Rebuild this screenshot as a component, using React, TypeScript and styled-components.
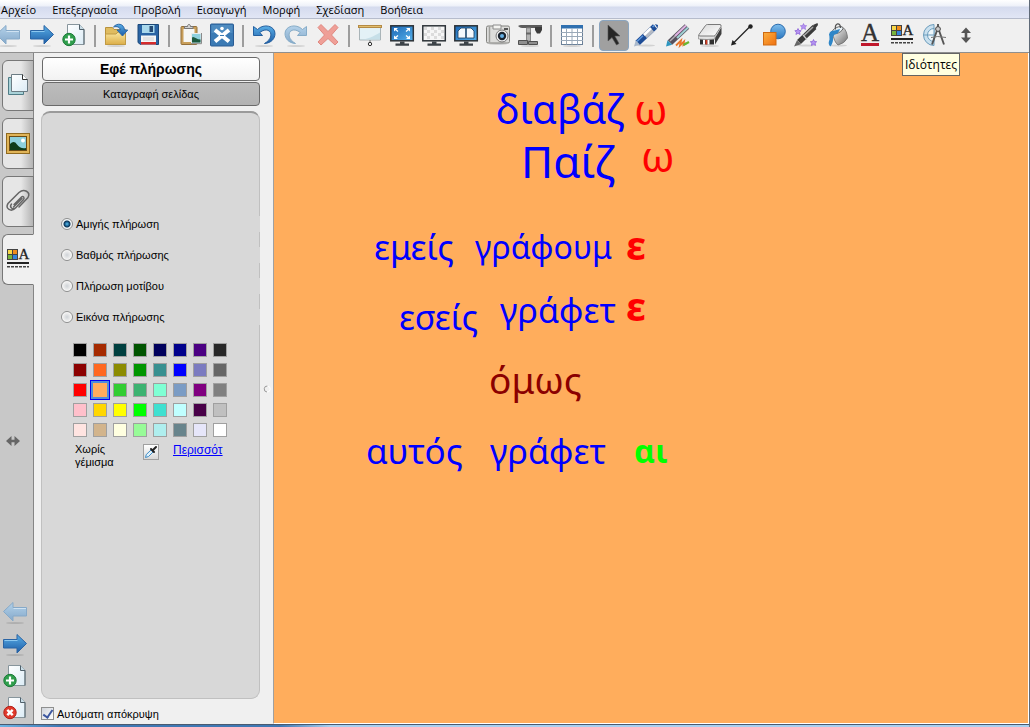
import React from "react";
import styled, { createGlobalStyle, css } from "styled-components";

const uiFont = css`
  font-family: "Open Sans", "Noto Sans", sans-serif;
`;
const panelFont = css`
  font-family: "Liberation Sans", Arial, sans-serif;
`;

const GlobalStyle = createGlobalStyle`
  * { box-sizing: border-box; }
  body { margin: 0; background: #f0f0f0; color: #000; overflow: hidden; }
  button { margin: 0; padding: 0; border: 0; background: none; color: inherit; cursor: pointer; }
  svg { overflow: visible; }
`;

const Window = styled.div`
  height: 100vh;
  display: flex;
  flex-direction: column;
  border-right: 1px solid #5f6a78;
  background: #f0f0f0;
`;

const MenuBar = styled.nav`
  display: flex;
  flex: none;
  height: 19px;
  padding-top: 1px;
  border-bottom: 1px solid #b6bccc;
  background: linear-gradient(#ffffff 0, #eef1f9 6px, #d5dbee 7px, #e1e6f5 18px);
`;

const MenuItem = styled.button`
  ${uiFont}
  font-size: 11px;
  line-height: 17px;
  padding: 0 8px;
  white-space: nowrap;
  &:first-child { padding-left: 1px; }
`;

const Toolbar = styled.div`
  display: flex;
  flex: none;
  align-items: center;
  height: 34px;
  border-bottom: 1px solid #8f8f8f;
  background: #f0f0f0;
`;

const ToolSlot = styled.div`
  position: relative;
  flex: none;
  width: 32px;
  height: 32px;
  display: flex;
  justify-content: center;
  &:first-child { width: 26px; justify-content: flex-end; padding-right: 3px; }
`;

const ToolButton = styled.button<{ $active?: boolean }>`
  width: 30px;
  height: 31px;
  display: flex;
  flex: none;
  align-items: center;
  justify-content: center;
  border-radius: 4px;
  ${(p) => p.$active && css`background: #a0a0a0; border: 1px solid #8aa5c0;`}
`;

const Separator = styled.span`
  flex: none;
  width: 2px;
  height: 22px;
  margin: 0 4px;
  background: #9d9d9d;
`;

const Tooltip = styled.div`
  ${uiFont}
  position: absolute;
  z-index: 2;
  top: 33px;
  left: 16px;
  height: 23px;
  padding: 0 2px;
  border: 1px solid #646464;
  background: #ffffe1;
  font-size: 12px;
  line-height: 21px;
`;

const Workspace = styled.div`
  flex: 1;
  min-height: 0;
  display: flex;
`;

const Rail = styled.aside`
  flex: none;
  width: 34px;
  display: flex;
  flex-direction: column;
  padding-top: 7px;
  border-right: 1px solid #858585;
  background: #c8c8c8;
`;

const RailTabs = styled.div`
  display: flex;
  flex-direction: column;
  gap: 7px;
  margin: 0 -1px 0 2px;
`;

const RailTab = styled.button<{ $active?: boolean }>`
  height: 51px;
  display: flex;
  align-items: center;
  justify-content: center;
  padding-bottom: 2px;
  border: 1px solid #777;
  border-radius: 6px 0 0 6px;
  background: linear-gradient(90deg, #e6e6e6 60%, #b4b4b4);
  ${(p) => p.$active && css`background: #f0f0f0; border-right-color: #f0f0f0;`}
`;

const RailMiddle = styled.div`
  flex: 1;
  display: flex;
  align-items: center;
  padding: 4px 0 0 5px;
`;

const RailButton = styled.button`
  height: 32px;
  display: flex;
  align-items: center;
  padding-left: 3px;
`;

const Panel = styled.section`
  ${panelFont}
  flex: none;
  width: 226px;
  display: flex;
  flex-direction: column;
  padding: 4px 0 1px 7px;
  font-size: 11px;
`;

const PanelTab = styled.button<{ $active?: boolean }>`
  ${panelFont}
  flex: none;
  height: 24px;
  margin: 0 0 1px 1px;
  border: 1px solid #6a6a6a;
  border-radius: 4px;
  font-size: ${(p) => (p.$active ? "14px" : "11px")};
  font-weight: ${(p) => (p.$active ? 700 : 400)};
  background: ${(p) => (p.$active ? "linear-gradient(#ffffff, #f2f2f2)" : "linear-gradient(#bcbcbc, #b2b2b2)")};
`;

const PanelBody = styled.div`
  flex: 1;
  min-height: 0;
  margin-top: 4px;
  padding: 103px 0 0 19px;
  border: 1px solid #c0c0c0;
  border-top: 2px solid #9a9a9a;
  border-radius: 9px;
  background: #d8d8d8;
`;

const RadioRow = styled.label`
  display: flex;
  align-items: center;
  gap: 3px;
  height: 16px;
  margin: 0 -1px 15px 0;
  background: #d8d8d8;
`;

const Radio = styled.input`
  appearance: none;
  width: 12px;
  height: 12px;
  margin: 0;
  border: 1px solid #8e8f8f;
  border-radius: 50%;
  background: radial-gradient(#cfd3d7 0, #f0f0f0 4px, #ffffff 5px);
  &:checked { background: radial-gradient(#5fc2ec 0, #1a5f92 2px, #0d3352 3px, #f2f6f8 4px); }
`;

const Palette = styled.div`
  display: grid;
  grid-template-columns: repeat(8, 20px);
  grid-auto-rows: 20px;
  margin: 7px 0 0 9px;
`;

const Swatch = styled.button<{ $color: string; $selected?: boolean }>`
  margin: 3px;
  border: 1px solid #a0a0a0;
  background: ${(p) => p.$color};
  ${(p) => p.$selected && css`
    margin: 0;
    border: 1px solid #0000f0;
    box-shadow: inset 0 0 0 2px #4f8fd8;
  `}
`;

const PaletteFooter = styled.div`
  display: flex;
  align-items: flex-start;
  margin: 3px 0 0 14px;
`;

const NoFill = styled.button`
  ${panelFont}
  width: 68px;
  font-size: 11px;
  line-height: 13px;
  text-align: left;
`;

const Dropper = styled.button`
  width: 16px;
  height: 16px;
  margin-top: 1px;
  border: 1px solid #a0a0a0;
  background: linear-gradient(#fff, #d8d8d8);
  svg { display: block; }
`;

const MoreLink = styled.a`
  ${panelFont}
  width: 52px;
  margin-left: 14px;
  overflow: hidden;
  font-size: 12px;
  line-height: 15px;
  color: #0000ff;
`;

const AutoHide = styled.label`
  flex: none;
  display: flex;
  align-items: center;
  gap: 3px;
  height: 23px;
  margin-top: 1px;
`;

const CheckBox = styled.input`
  appearance: none;
  width: 13px;
  height: 13px;
  margin: 4px 0 0;
  border: 1px solid #8e8f8f;
  background: linear-gradient(135deg, #d0d4da, #ffffff);
  & + span { margin-top: 4px; }
  &:checked::after {
    content: "";
    display: block;
    width: 4px;
    height: 8px;
    margin: 0 auto;
    border: solid #3c57a0;
    border-width: 0 2px 2px 0;
    transform: rotate(35deg);
  }
`;

const Splitter = styled.div`
  flex: none;
  width: 13px;
  display: flex;
  align-items: center;
  padding-left: 2px;
`;

const Board = styled.main`
  position: relative;
  flex: 1;
  min-width: 0;
  overflow: hidden;
  border-left: 1px solid #a0a0a0;
  border-right: 1px solid #fff;
  border-bottom: 1px solid #fff;
  background: #ffad5c;
`;

const Word = styled.span<{ $x: number; $y: number; $size: number; $color: string; $bold?: boolean }>`
  position: absolute;
  left: ${(p) => p.$x}px;
  top: ${(p) => p.$y}px;
  font-family: "Noto Sans", "Open Sans", sans-serif;
  font-size: ${(p) => p.$size}px;
  font-weight: ${(p) => (p.$bold ? 700 : 400)};
  line-height: 48px;
  white-space: nowrap;
  color: ${(p) => p.$color};
`;

const WindowEdge = styled.footer`
  flex: none;
  height: 3px;
  border-top: 1px solid #4a5a70;
  background: linear-gradient(90deg, #6cb4e4 0, #3f78b4 60px, #3f78b4 280px, #a8d0f0 330px);
`;

/* ---------- icons ---------- */

const Svg = ({ children, w = 24, h = 24 }: { children: React.ReactNode; w?: number; h?: number }) => (
  <svg width={w} height={h} viewBox={`0 0 ${w} ${h}`} fill="none" aria-hidden="true">{children}</svg>
);

const GradientDefs = styled.svg`
  display: block;
`;

const Gradients = () => (
  <GradientDefs width="0" height="0" aria-hidden="true">
    <defs>
      <linearGradient id="blue" x1="0" y1="0" x2="0" y2="1"><stop stopColor="#5aaee6" /><stop offset="1" stopColor="#1c5ca6" /></linearGradient>
      <linearGradient id="pale" x1="0" y1="0" x2="0" y2="1"><stop stopColor="#b4d2ea" /><stop offset="1" stopColor="#85a9ca" /></linearGradient>
      <linearGradient id="paper" x1="0" y1="0" x2="1" y2="1"><stop stopColor="#ffffff" /><stop offset="1" stopColor="#dcecf6" /></linearGradient>
      <linearGradient id="gold" x1="0" y1="0" x2="0" y2="1"><stop stopColor="#fbe7a0" /><stop offset="1" stopColor="#dcae48" /></linearGradient>
      <linearGradient id="screen" x1="0" y1="0" x2="1" y2="1"><stop stopColor="#1b66b4" /><stop offset="1" stopColor="#55b0ea" /></linearGradient>
      <linearGradient id="ball" x1="0" y1="0" x2="0" y2="1"><stop stopColor="#7cbcec" /><stop offset="1" stopColor="#2c78c0" /></linearGradient>
      <linearGradient id="steel" x1="0" y1="0" x2="1" y2="1"><stop stopColor="#ffffff" /><stop offset="1" stopColor="#6c6c6c" /></linearGradient>
      <linearGradient id="rubber" x1="0" y1="0" x2="1" y2="1"><stop stopColor="#d8d8d8" /><stop offset="1" stopColor="#ffffff" /></linearGradient>
      <linearGradient id="orange" x1="0" y1="0" x2="1" y2="1"><stop stopColor="#fcb040" /><stop offset="1" stopColor="#f07010" /></linearGradient>
    </defs>
  </GradientDefs>
);

const Shade = ({ y = 23 }: { y?: number }) => <ellipse cx="12" cy={y} rx="9" ry="1" fill="#000" opacity=".12" />;

const BackIcon = () => (
  <Svg><path d="M.5 11.500 10 2.500v5h13.500v8.500H10v5z" fill="url(#pale)" stroke="#86a9c8" /><path d="M10.500 8.500h12.500" stroke="#cfe2f2" /><Shade /></Svg>
);
const ForwardIcon = () => (
  <Svg><path d="M23.500 11.500 14 2.500v5H.5v8.500H14v5z" fill="url(#blue)" stroke="#2a64a4" /><path d="M1.500 8.500h13" stroke="#8cc8f0" /><Shade /></Svg>
);
const Page = () => (
  <><path d="M5.500 1.500h12l4.500 5v15h-16.500z" fill="url(#paper)" stroke="#87959c" /><path d="M17.500 1.500v5H22" fill="#c8dce6" stroke="#50606a" /><path d="M22 6.500v15" stroke="#56666e" /></>
);
const AddPageIcon = () => (
  <Svg><Page /><circle cx="7" cy="16.500" r="6.200" fill="#2f9e4c" stroke="#1b7a38" /><path d="M7 12.500v8M3 16.500h8" stroke="#fff" strokeWidth="2.200" /></Svg>
);
const DeletePageIcon = () => (
  <Svg><Page /><circle cx="7" cy="16.500" r="6.200" fill="#e03a2c" stroke="#b32018" /><path d="m4.300 13.800 5.400 5.400m0-5.400-5.400 5.400" stroke="#fff" strokeWidth="2.400" /></Svg>
);
const OpenIcon = () => (
  <Svg><path d="M1.500 21.500v-17h7l1.500 2h11.500v15z" fill="#e0bc60" stroke="#b8923c" /><path d="M1.500 21.500V11H12l2-2h7.500v12.500z" fill="url(#gold)" stroke="#c09a44" /><path d="M9.500 4C13-.5 20 .5 20.500 7h3.200l-5.200 6L13 7h3.300c-.3-3-3.300-4-6.800-3z" fill="url(#blue)" stroke="#2c68a8" /><Shade /></Svg>
);
const SaveIcon = () => (
  <Svg><path d="M2 1.500h20.500v20h-18L2 19.500z" fill="#2a64a4" stroke="#1b4878" /><path d="M6 2h12.500v8H6z" fill="#a9d8ec" /><path d="M13.500 3H17v6h-3.500z" fill="#254a74" /><path d="M5 12.500h15v9H5z" fill="#f6f6f6" /><path d="M5 19h15v2.500H5z" fill="#d62c2c" /><path d="M7 15h11M7 17h11" stroke="#d4d4d4" /></Svg>
);
const PasteIcon = () => (
  <Svg><rect x="3" y="3.500" width="16" height="18" rx="1" fill="#c99f5a" stroke="#94703a" /><path d="M5.500 6h11v13h-11z" fill="#f6f6f4" /><path d="M6.500 5.500v-2H9.500c0-2.800 3-2.800 3 0H15v2z" fill="#d0d0d0" stroke="#777" /><rect x="13.500" y="10.500" width="9.500" height="9.500" fill="#8ed0de" stroke="#e8ecec" /><path d="M14 14.500c2-2 4 2 8.500 2v3H14z" fill="#1d5a40" /><path d="M23.500 10v10.700H13" stroke="#8a8a8a" /></Svg>
);
const HideIcon = () => (
  <Svg><rect x=".5" y="1" width="23" height="22" rx="1" fill="#3b7ab4" stroke="#2a5c94" /><path d="M1.500 2h21v8h-21z" fill="#5c96c8" opacity=".6" /><circle cx="12" cy="5.500" r="1.800" fill="#fff" /><path d="m5 7 14 11.500M19 7 5 18.500" stroke="#fff" strokeWidth="4" /><path d="m10 12.500 4 0" stroke="#3b7ab4" /></Svg>
);
const UndoIcon = () => (
  <Svg><path d="M1.500 3.500v9h9L7.800 9.500c6-5 12-2 11 3.500-.5 3-3 5.500-6.300 7.500 7-.5 10.500-5 10.500-10 0-7.500-11-10.500-17.500-4z" fill="url(#blue)" stroke="#25609f" /><Shade /></Svg>
);
const RedoIcon = () => (
  <Svg><path d="M22.500 3.500v9h-9l2.700-3c-6-5-12-2-11 3.500.5 3 3 5.500 6.300 7.500-7-.5-10.500-5-10.500-10 0-7.500 11-10.500 17.500-4z" fill="url(#pale)" stroke="#86acc8" /><Shade /></Svg>
);
const DeleteIcon = () => (
  <Svg><path d="m5 1.500 7 7 7-7 3 3-6.500 7.500 6.500 7-3 3-7-6.500L5 22l-3-3 6.500-7L2 4.500z" fill="#ef9f97" stroke="#e08880" /></Svg>
);
const ShadeIcon = () => (
  <Svg><path d="M1.500 4h21v13h-21z" fill="#e3f1f6" stroke="#a9b4b8" /><path d="M2 16.500c8 0 13-3 20-7v7z" fill="#c6dfe8" /><rect x=".5" y="2.500" width="23" height="2" fill="#e2bd6c" stroke="#b48a44" /><path d="M12 17v2.500" stroke="#777" /><circle cx="12" cy="21" r="1.700" stroke="#333" /></Svg>
);
const Monitor = ({ fill, children }: { fill: string; children?: React.ReactNode }) => (
  <Svg><rect x=".8" y="2.800" width="22.500" height="15" fill={fill} stroke="#2d3338" strokeWidth="1.500" />{children}<path d="M10 18.500h4.500v2H19v2.200H5.500v-2.200H10z" fill="#3c4348" /></Svg>
);
const FullScreenIcon = () => (
  <Monitor fill="url(#screen)"><path d="M4 5h4L4 8.500zM20 5h-4l4 3.500zM4 16h4l-4-3.500zM20 16h-4l4-3.500z" fill="#fff" /><path d="m5 6 3 2.500M19 6l-3 2.500M5 15l3-2.500M19 15l-3-2.500" stroke="#fff" strokeWidth="1.300" /></Monitor>
);
const ClearScreenIcon = () => (
  <Monitor fill="#f6f6f6">{[0, 1, 2, 3].map((r) => [0, 1, 2].map((c) => <rect key={`${r}${c}`} x={2 + c * 7 + (r % 2) * 3} y={4 + r * 3} width="3" height="3" fill="#dcdcdc" />))}</Monitor>
);
const DualIcon = () => (
  <Monitor fill="url(#screen)"><path d="M4 15V8l3-3h4.700v10zM20 15V8l-3-3h-4.700v10z" fill="#f4f9fc" stroke="#173c60" strokeWidth=".8" /></Monitor>
);
const CameraIcon = () => (
  <Svg><rect x=".5" y="3" width="23" height="17" rx="1.500" fill="#dcdcda" stroke="#82827e" /><path d="M3.500 3.500v16" stroke="#a0a09c" strokeWidth="1.500" /><path d="M7 2h8v4H7z" fill="#f3f3f0" stroke="#8c8c8c" /><path d="M18 6h4" stroke="#555" strokeWidth="2" /><circle cx="16" cy="13" r="6" fill="#efefef" stroke="#777" /><circle cx="16" cy="13" r="4.200" fill="#1b2430" /><circle cx="16" cy="13" r="2" fill="#66b0e4" /><Shade y={21} /></Svg>
);
const DocCamIcon = () => (
  <Svg><path d="M0 3q2-1.500 4-1h20v3H4Q2 5 0 3z" fill="#5c5c5c" /><path d="M17 4h7v3l-2 3.500h-3L17 7z" fill="#3c3c3c" /><path d="M8.500 5h4v13h-4z" fill="#b4b4b4" stroke="#888" /><path d="M8 9.500h5v2H8z" fill="#666" /><path d="M.5 17.500h9v4h-9zM10.500 18.500h9v3h-9z" fill="#8f8f8f" stroke="#505050" /><Shade /></Svg>
);
const TableIcon = () => (
  <Svg><rect x="1.500" y="2.500" width="21" height="19" fill="#fff" stroke="#6a8098" /><path d="M1 2h22v3.500H1z" fill="#2f70b0" /><path d="M1 9.500h22M1 13.500h22M1 17.500h22M6.500 5.500v16M12 5.500v16M17.500 5.500v16" stroke="#9aa9b8" /><Shade y={23} /></Svg>
);
const SelectIcon = () => (
  <Svg><path d="M6 2v16l4-3.500 4.500 7.500 2.500-1.500-4.200-7.500H18z" fill="#262626" stroke="#555" strokeWidth=".6" /></Svg>
);
const PenIcon = () => (
  <Svg><Shade y={22.500} /><path d="M3.500 20 21 3.500" stroke="#1d4c96" strokeWidth="6" /><path d="M11 13 18 6.300" stroke="#b4bac4" strokeWidth="6" /><path d="m10 12 7-6.800" stroke="#ffffff" strokeWidth="2.500" /><path d="m3 18.500 6-5.700M18.500 4l2-1.800" stroke="#5c96dc" strokeWidth="1.500" /><path d="m21 1 3 1-.5 3.500z" fill="#1d4c96" /><path d="m0 23.500 1.800-6.300 4.200 4.500z" fill="#a8b8cc" /></Svg>
);
const CreativePenIcon = () => (
  <Svg><path d="m10 22.500 5-5-1 5 4-4-.5 3.500 3-2" stroke="#e8762a" strokeWidth="1.800" /><path d="m17.500 22 5.500-3" stroke="#66b832" strokeWidth="2" /><path d="M4 19.500 21 3.500" stroke="#56505c" strokeWidth="6.500" /><path d="M9 13 20 2.500" stroke="#e0b4e4" strokeWidth="2" /><path d="M11 15 22 4.500" stroke="#9fd0d4" strokeWidth="2" /><path d="m4 18 5.500-5.200" stroke="#b4b0b8" strokeWidth="1.400" /><path d="m0 23.500 1.500-6.300 4.700 4.500z" fill="#2c96c0" /></Svg>
);
const EraserIcon = () => (
  <Svg><Shade /><path d="m23.500 4-6.500 11v6.500L23.500 11z" fill="#404040" /><path d="M2 16h14v5.500H2z" fill="#303030" /><path d="M5 16.500h2v5H5z" fill="#fff" /><path d="M7.500 16.500h2v5h-2z" fill="#d63c22" /><path d="M9.500 16.500h2v5h-2z" fill="#fff" /><path d="M.5 12.500h16.500v3.500q-8 1-16.500 0z" fill="#e4e4e4" stroke="#888" strokeWidth=".7" /><path d="M9.500 1.500H22q1.500 0 1 2L17.500 12q-.5 1-2 1H2q-2 0-1-1.500L7.500 2.500q.8-1 2-1z" fill="url(#rubber)" stroke="#6c6c6c" strokeWidth=".9" /></Svg>
);
const LineIcon = () => (
  <Svg><path d="M3 20.500 19.500 4" stroke="#222" strokeWidth="1.300" /><circle cx="20.500" cy="3.500" r="2.200" fill="#222" /><path d="m1 22.500 1.500-5.500 4 4z" fill="#222" /></Svg>
);
const ShapesIcon = () => (
  <Svg><circle cx="16" cy="8.500" r="7.300" fill="url(#ball)" stroke="#2b6cae" /><rect x="1.500" y="9.500" width="12.500" height="12.500" fill="url(#orange)" stroke="#cf6a12" /></Svg>
);
const star = (x: number, y: number) => `M${x} ${y - 3}l1 2 2.200.2-1.600 1.500.5 2.300-2.100-1.200-2.100 1.200.5-2.300-1.600-1.500 2.200-.2z`;
const MagicPenIcon = () => (
  <Svg><Shade y={22.500} /><path d="M5 19 20.500 4" stroke="#3a3a3a" strokeWidth="5.500" /><path d="m19 2 4.500-2 .5 2-3 4z" fill="#3a3a3a" /><path d="m10 12.500 9-8.500" stroke="#a8a8a8" strokeWidth="1.500" /><path d="m9 12 4 4.500" stroke="#ccc" strokeWidth="1.300" /><path d="m0 23.500 3-6.300 4 4z" fill="#666" /><path d={star(4, 8.500)} fill="#b593f2" stroke="#8458d4" strokeWidth=".7" /><path d={star(9.500, 3.500)} fill="#b593f2" stroke="#8458d4" strokeWidth=".5" /><path d={star(19.500, 19.500)} fill="#b593f2" stroke="#8458d4" strokeWidth=".7" /></Svg>
);
const FillIcon = () => (
  <Svg><Shade y={22.500} /><path d="m6.500 9.500 10.500-5q4 3 4.500 10.500-3 5.500-9.500 7-4-3-5.500-12.500z" fill="url(#steel)" stroke="#6c6c6c" strokeWidth=".8" /><ellipse cx="11.500" cy="7.200" rx="6" ry="2.800" transform="rotate(-26 11.500 7.200)" fill="#e8f0f4" stroke="#555" strokeWidth=".8" /><path d="M9.500 6.500C8.500-.5 14.500-1 14.500 5" stroke="#555" strokeWidth="1.300" /><path d="M5.500 8q4-.5 8.500-2-1.500 5-5.500 5.500L7 14q.5 5.500-2.500 9.500-3-2-1-7 0-4-.5-5 .5-3 2.500-3.500z" fill="#2e86c8" /></Svg>
);
const TextIcon = () => (
  <Svg><text x="12" y="18" textAnchor="middle" fontFamily="Liberation Serif, serif" fontSize="25" fill="#333" stroke="#333" strokeWidth=".4">A</text><path d="M3 20h18v3H3z" fill="#c0182c" /></Svg>
);
const PropertiesIcon = () => (
  <Svg><path d="M1 2h11v11H1z" fill="#444" /><path d="M2 3h4v4H2z" fill="#f8d848" /><path d="M7 3h4v4H7z" fill="#f08c1c" /><path d="M2 8h4v4H2z" fill="#78b43c" /><path d="M7 8h4v4H7z" fill="#3484dc" /><text x="18" y="12" textAnchor="middle" fontFamily="Liberation Serif, serif" fontSize="15" fill="#222" stroke="#222" strokeWidth=".3">A</text><path d="M1 16h22" stroke="#222" strokeWidth="2" /><path d="M1 19.800h22" stroke="#444" strokeWidth="1.500" strokeDasharray="3 1" /></Svg>
);
const MeasureIcon = () => (
  <Svg><path d="M12 1.500a10.500 10.500 0 0 0 0 21z" fill="#c9e0ee" stroke="#6b9cbc" /><path d="M12 5.500a6.500 6.500 0 0 0 0 13z" fill="#eef6fa" stroke="#6b9cbc" /><path d="M2 12h10" stroke="#6b9cbc" /><path d="M16 1v4M15.500 6 10 21.500M16.500 6l5.500 15.500" stroke="#555" strokeWidth="1.900" /><circle cx="16" cy="6" r="2.400" fill="#ccc" stroke="#444" /><path d="M9 14.500q6-2 15 0" stroke="#777" /></Svg>
);
const VerticalIcon = () => (
  <Svg><path d="m12 4.500 5 5.500h-3.700v4.500H17L12 20l-5-5.500h3.700V10H7z" fill="#555" /></Svg>
);
const PagesIcon = () => (
  <Svg><path d="M2.500 4.500h15v17h-15z" fill="#a9d2d8" stroke="#4f7c86" /><path d="M5.500 1.500h11l5 5v12h-16z" fill="url(#paper)" stroke="#6c7c84" /><path d="M16.500 1.500v5h5" fill="#fff" stroke="#333" /></Svg>
);
const GalleryIcon = () => (
  <Svg><rect x=".5" y="2.500" width="23" height="20" fill="#e0b458" stroke="#906a20" /><rect x="3.500" y="5.500" width="17" height="14" fill="#8ed0dc" stroke="#6c4c14" /><circle cx="17" cy="9.500" r="2" fill="#fff" /><path d="M4 13q4-4 7 .5t9 3.500v2H4z" fill="#0e3c1a" /></Svg>
);
const ClipIcon = () => (
  <Svg><path d="m8 15.500 7.500-7.500c1.500-1.500 3.500.5 2 2.500L10 18.500c-3.500 3-7-.5-4.500-3.500M7.500 18 16 9.500M10 18.500C5 24-1 19.500 2 14.500L13 3.500c5-4.500 12-.5 9 5L13 18" stroke="#666" strokeWidth="1.500" strokeLinecap="round" /></Svg>
);
const ResizeIcon = () => (
  <Svg w={16} h={12}><path d="m1 6 5.500-5v3.700h3V1L15 6l-5.500 5V7.300h-3V11z" fill="#666" /></Svg>
);
const DropperIcon = () => (
  <Svg w={14} h={14}><path d="m1.500 12.500.8-3L7 5l2 2-4.500 4.500z" fill="#dff0fa" stroke="#3c8cc8" /><path d="m7 4 3 3M9 5l3-3" stroke="#222" strokeWidth="2" strokeLinecap="round" /></Svg>
);

/* ---------- data ---------- */

const menus = ["Αρχείο", "Επεξεργασία", "Προβολή", "Εισαγωγή", "Μορφή", "Σχεδίαση", "Βοήθεια"];

const toolGroups: { name: string; icon: React.ReactNode; active?: boolean; tip?: string }[][] = [
  [{ name: "back", icon: <BackIcon /> }, { name: "forward", icon: <ForwardIcon /> }, { name: "add page", icon: <AddPageIcon /> }],
  [{ name: "open", icon: <OpenIcon /> }, { name: "save", icon: <SaveIcon /> }],
  [{ name: "paste", icon: <PasteIcon /> }, { name: "hide", icon: <HideIcon /> }],
  [{ name: "undo", icon: <UndoIcon /> }, { name: "redo", icon: <RedoIcon /> }, { name: "delete", icon: <DeleteIcon /> }],
  [
    { name: "screen shade", icon: <ShadeIcon /> },
    { name: "full screen", icon: <FullScreenIcon /> },
    { name: "transparent background", icon: <ClearScreenIcon /> },
    { name: "dual page", icon: <DualIcon /> },
    { name: "capture", icon: <CameraIcon /> },
    { name: "document camera", icon: <DocCamIcon /> },
  ],
  [{ name: "table", icon: <TableIcon /> }],
  [
    { name: "select", icon: <SelectIcon />, active: true },
    { name: "pen", icon: <PenIcon /> },
    { name: "creative pen", icon: <CreativePenIcon /> },
    { name: "eraser", icon: <EraserIcon /> },
    { name: "line", icon: <LineIcon /> },
    { name: "shapes", icon: <ShapesIcon /> },
    { name: "magic pen", icon: <MagicPenIcon /> },
    { name: "fill", icon: <FillIcon /> },
    { name: "text", icon: <TextIcon /> },
    { name: "properties", icon: <PropertiesIcon />, tip: "Ιδιότητες" },
    { name: "measurement", icon: <MeasureIcon /> },
    { name: "move toolbar", icon: <VerticalIcon /> },
  ],
];

const fills = ["Αμιγής πλήρωση", "Βαθμός πλήρωσης", "Πλήρωση μοτίβου", "Εικόνα πλήρωσης"];

const selectedColor = "#ffad5c";
const colors = [
  "#000000", "#a52a00", "#004040", "#005500", "#00005c", "#00008b", "#4b0082", "#282828",
  "#8b0000", "#ff6820", "#8b8b00", "#009600", "#389090", "#0000ff", "#7b7bc0", "#666666",
  "#ff0000", selectedColor, "#32cd32", "#3cb371", "#7fffd4", "#7b9cc4", "#800080", "#808080",
  "#ffc0cb", "#ffd700", "#ffff00", "#00ff00", "#40e0d0", "#c0ffff", "#480048", "#c0c0c0",
  "#ffe4e1", "#d2b48c", "#ffffe0", "#98fb98", "#afeeee", "#68848c", "#e6e6fa", "#ffffff",
];

const blue = "#0000ff";
const red = "#ff0000";
const words = [
  { text: "διαβάζ", x: 222, y: 32, size: 40, color: blue },
  { text: "ω", x: 360, y: 32, size: 42, color: red },
  { text: "Παίζ", x: 247, y: 84, size: 44, color: blue },
  { text: "ω", x: 367, y: 79, size: 42, color: red },
  { text: "εμείς", x: 100, y: 170, size: 34, color: blue },
  { text: "γράφουμ", x: 201, y: 170, size: 32, color: blue },
  { text: "ε", x: 352, y: 168, size: 40, color: red, bold: true },
  { text: "εσείς", x: 125, y: 240, size: 34, color: blue },
  { text: "γράφετ", x: 226, y: 233, size: 34, color: blue },
  { text: "ε", x: 352, y: 229, size: 40, color: red, bold: true },
  { text: "όμως", x: 215, y: 303, size: 37, color: "#8b0000" },
  { text: "αυτός", x: 92, y: 374, size: 35, color: blue },
  { text: "γράφετ", x: 216, y: 374, size: 34, color: blue },
  { text: "αι", x: 360, y: 374, size: 32, color: "#00ff00", bold: true },
];

export default function App() {
  return (
    <Window>
      <GlobalStyle />
      <Gradients />
      <MenuBar>
        {menus.map((m) => <MenuItem key={m}>{m}</MenuItem>)}
      </MenuBar>
      <Toolbar role="toolbar">
        {toolGroups.map((group, i) => (
          <React.Fragment key={i}>
            {i > 0 && <Separator />}
            {group.map((t) => (
              <ToolSlot key={t.name}>
                <ToolButton $active={t.active} aria-label={t.name}>{t.icon}</ToolButton>
                {t.tip && <Tooltip role="tooltip">{t.tip}</Tooltip>}
              </ToolSlot>
            ))}
          </React.Fragment>
        ))}
      </Toolbar>
      <Workspace>
        <Rail>
          <RailTabs>
            <RailTab aria-label="pages"><PagesIcon /></RailTab>
            <RailTab aria-label="gallery"><GalleryIcon /></RailTab>
            <RailTab aria-label="attachments"><ClipIcon /></RailTab>
            <RailTab aria-label="properties" $active><PropertiesIcon /></RailTab>
          </RailTabs>
          <RailMiddle><button aria-label="move sidebar"><ResizeIcon /></button></RailMiddle>
          <RailButton aria-label="previous page"><BackIcon /></RailButton>
          <RailButton aria-label="next page"><ForwardIcon /></RailButton>
          <RailButton aria-label="add page"><AddPageIcon /></RailButton>
          <RailButton aria-label="delete page"><DeletePageIcon /></RailButton>
        </Rail>
        <Panel>
          <PanelTab $active>Εφέ πλήρωσης</PanelTab>
          <PanelTab>Καταγραφή σελίδας</PanelTab>
          <PanelBody>
            {fills.map((f, i) => (
              <RadioRow key={f}>
                <Radio type="radio" name="fill" defaultChecked={i === 0} />
                {f}
              </RadioRow>
            ))}
            <Palette>
              {colors.map((c) => <Swatch key={c} $color={c} $selected={c === selectedColor} aria-label={c} />)}
            </Palette>
            <PaletteFooter>
              <NoFill>Χωρίς<br />γέμισμα</NoFill>
              <Dropper aria-label="pick color"><DropperIcon /></Dropper>
              <MoreLink href="#more">Περισσότ</MoreLink>
            </PaletteFooter>
          </PanelBody>
          <AutoHide>
            <CheckBox type="checkbox" defaultChecked />
            <span>Αυτόματη απόκρυψη</span>
          </AutoHide>
        </Panel>
        <Splitter>
          <Svg w={8} h={8}><path d="M5.500 1A3 3 0 1 0 5 7" stroke="#999" /><path d="M5 7a3 3 0 0 0 .5-6" stroke="#fff" /></Svg>
        </Splitter>
        <Board>
          {words.map((w, i) => (
            <Word key={i} $x={w.x} $y={w.y} $size={w.size} $color={w.color} $bold={w.bold}>{w.text}</Word>
          ))}
        </Board>
      </Workspace>
      <WindowEdge />
    </Window>
  );
}
